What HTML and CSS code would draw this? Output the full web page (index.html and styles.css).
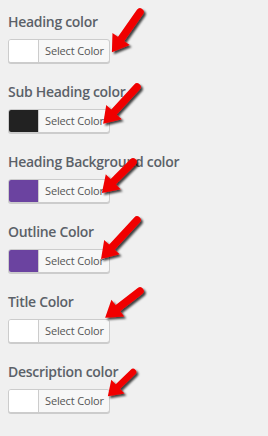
FILE: index.html
```html
<!DOCTYPE html>
<html lang="en">
<head>
    <meta charset="UTF-8">
    <title>Color settings</title>
    <link rel="stylesheet" href="styles.css">
</head>
<body>
    <div class="settings">
        <div class="field">
            <h3>Heading color</h3>
            <button class="color-btn"><span class="swatch" style="background:#ffffff"></span><span class="btn-text">Select Color</span></button>
        </div>
        <div class="field">
            <h3>Sub Heading color</h3>
            <button class="color-btn"><span class="swatch" style="background:#222222"></span><span class="btn-text">Select Color</span></button>
        </div>
        <div class="field">
            <h3>Heading Background color</h3>
            <button class="color-btn"><span class="swatch" style="background:#6b43a0"></span><span class="btn-text">Select Color</span></button>
        </div>
        <div class="field">
            <h3>Outline Color</h3>
            <button class="color-btn"><span class="swatch" style="background:#6b43a0"></span><span class="btn-text">Select Color</span></button>
        </div>
        <div class="field">
            <h3>Title Color</h3>
            <button class="color-btn"><span class="swatch" style="background:#ffffff"></span><span class="btn-text">Select Color</span></button>
        </div>
        <div class="field">
            <h3>Description color</h3>
            <button class="color-btn"><span class="swatch" style="background:#ffffff"></span><span class="btn-text">Select Color</span></button>
        </div>
    </div>

    <!-- red annotation arrows drawn over the form -->
    <svg class="arrows" width="268" height="436" viewBox="0 0 268 436">
        <defs>
            <filter id="shadow" x="-30%" y="-30%" width="160%" height="160%">
                <feDropShadow dx="2" dy="2" stdDeviation="1.2" flood-color="#000" flood-opacity="0.75"/>
            </filter>
        </defs>
        <g fill="#f00000" stroke="#f00000" filter="url(#shadow)">
            <g transform="translate(140 12) rotate(125)">
                <line x1="0" y1="0" x2="36" y2="0" stroke-width="7.5" stroke-linecap="round"/>
                <polygon points="49,0 33,-10.5 33,10.5" stroke="none"/>
            </g>
            <g transform="translate(137 87) rotate(132.6)">
                <line x1="0" y1="0" x2="37" y2="0" stroke-width="7.5" stroke-linecap="round"/>
                <polygon points="50,0 34,-10.5 34,10.5" stroke="none"/>
            </g>
            <g transform="translate(133 162) rotate(135)">
                <line x1="0" y1="0" x2="31" y2="0" stroke-width="7.5" stroke-linecap="round"/>
                <polygon points="44,0 28,-10.5 28,10.5" stroke="none"/>
            </g>
            <g transform="translate(137 220) rotate(132.7)">
                <line x1="0" y1="0" x2="40" y2="0" stroke-width="7.5" stroke-linecap="round"/>
                <polygon points="53,0 37,-10.5 37,10.5" stroke="none"/>
            </g>
            <g transform="translate(140 291) rotate(142.4)">
                <line x1="0" y1="0" x2="31" y2="0" stroke-width="7.5" stroke-linecap="round"/>
                <polygon points="44,0 28,-10.5 28,10.5" stroke="none"/>
            </g>
            <g transform="translate(133 372) rotate(136)">
                <line x1="0" y1="0" x2="23" y2="0" stroke-width="6.5" stroke-linecap="round"/>
                <polygon points="35,0 21,-9.5 21,9.5" stroke="none"/>
            </g>
        </g>
    </svg>
</body>
</html>
```

FILE: styles.css
```css
* {
    margin: 0;
    padding: 0;
    box-sizing: border-box;
}
body {
    background: #f0f0f0;
    width: 268px;
    height: 436px;
    overflow: hidden;
    position: relative;
    font-family: 'Open Sans', 'Noto Sans', sans-serif;
}
.settings {
    padding: 12px 8px 0;
}
.field {
    height: 70px;
}
.field h3 {
    font-size: 14px;
    line-height: 20px;
    font-weight: 600;
    letter-spacing: -0.3px;
    color: #5b6168;
    white-space: nowrap;
    margin-bottom: 7px;
}
.color-btn {
    display: flex;
    width: 102px;
    height: 24px;
    border: 1px solid #cccccc;
    border-radius: 3px;
    background: #f7f7f7;
    box-shadow: 0 1px 0 #cccccc;
    overflow: hidden;
    cursor: pointer;
    font-family: inherit;
}
.swatch {
    width: 30px;
    height: 100%;
    border-right: 1px solid #cccccc;
}
.btn-text {
    flex: 1;
    font-size: 11px;
    line-height: 22px;
    letter-spacing: -0.15px;
    color: #555555;
    text-align: left;
    padding-left: 6px;
}
.arrows {
    position: absolute;
    left: 0;
    top: 0;
    pointer-events: none;
}
```
